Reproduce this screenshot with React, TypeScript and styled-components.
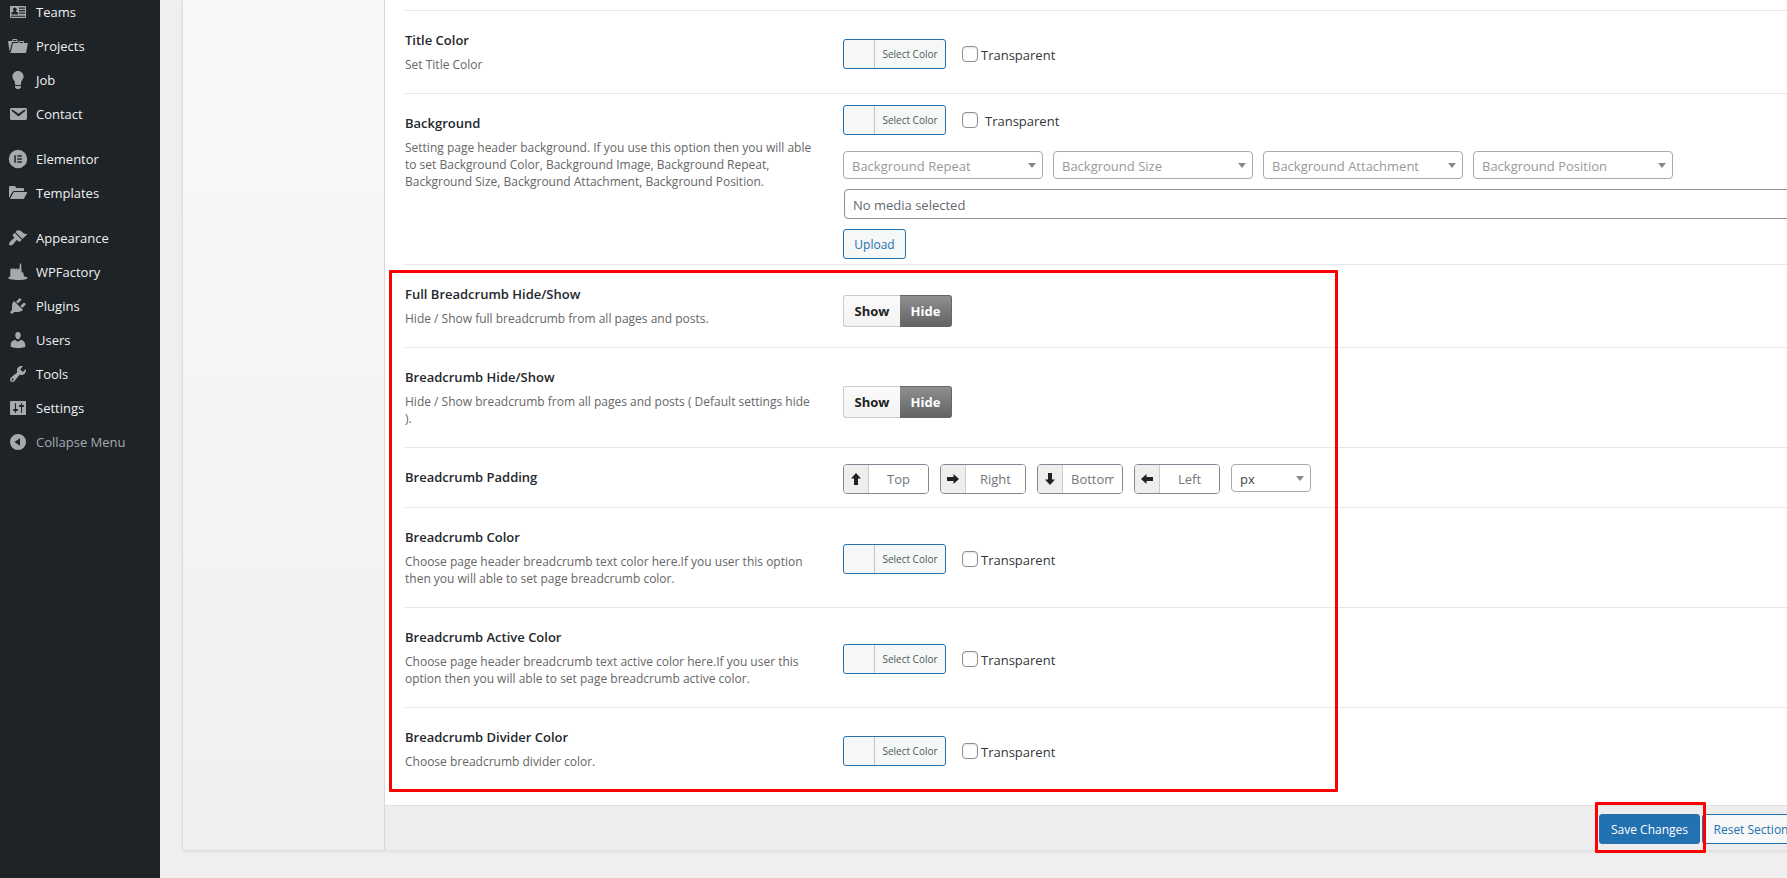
import React, { useId, useState } from "react";
import styled, { createGlobalStyle } from "styled-components";

const GlobalStyle = createGlobalStyle`
  *, *::before, *::after { box-sizing: border-box; }
  body {
    margin: 0;
    background: #f0f0f1;
    color: #333;
    font-family: "Open Sans", "Noto Sans", sans-serif;
    font-size: 13px;
    line-height: 18px;
  }
  input, select, button { font-family: inherit; }
`;

const Page = styled.div`
  display: flex;
  align-items: stretch;
  min-height: 100vh;
  overflow: hidden;
  background: #efefef;
`;

/* ---------- admin menu ---------- */

const Sidebar = styled.nav`
  flex: 0 0 160px;
  background: #1d2327;
`;

const MenuList = styled.ul`
  list-style: none;
  margin: -5px 0 0;
  padding: 0;
`;

const MenuEntry = styled.li<{ $gap?: boolean }>`
  margin-top: ${(p) => (p.$gap ? 11 : 0)}px;
`;

const MenuLink = styled.a<{ $muted?: boolean }>`
  display: flex;
  align-items: center;
  gap: 8px;
  height: 34px;
  padding-left: 8px;
  font-size: 13px;
  color: ${(p) => (p.$muted ? "#a7aaad" : "#f0f0f1")};
  text-decoration: none;
`;

const MenuIcon = styled.svg`
  flex: 0 0 20px;
  width: 20px;
  height: 20px;
  fill: #a7aaad;
`;

type MenuItem = { label: string; icon: React.ReactNode; gap?: boolean; muted?: boolean };

const menu: MenuItem[] = [
  {
    label: "Teams",
    icon: (
      <path
        fillRule="evenodd"
        d="M3 4h14c.6 0 1 .4 1 1v10c0 .6-.4 1-1 1H3c-.6 0-1-.4-1-1V5c0-.6.4-1 1-1zm8 1.500v1.200h6V5.500zm0 2.500v1.200h6V8zm0 2.500v1.200h6v-1.200zM3 13.800v1h14v-1zM6.800 5.500c-1.200 0-1.900.8-1.800 1.900.1 1 .6 1.900 1.100 2.100L3.500 10.300v2.200h6.400v-2.200L7.600 9.500c.5-.2 1-1.100 1.100-2.100.1-1.100-.7-1.900-1.900-1.900z"
      />
    ),
  },
  {
    label: "Projects",
    icon: (
      <path d="M4 5H.78c-.37 0-.74.32-.69.84l1.560 9.990S3.500 8.470 3.860 6.700c.11-.53.61-.7.98-.7H10s-.7-2.080-.77-2.310C9.110 3.250 8.890 3 8.450 3H5.140c-.36 0-.7.23-.8.64C4.250 4.040 4 5 4 5zm4.880 0h-4s.42-1 .87-1h2.130c.48 0 1 1 1 1zM2.670 16.250c-.31.47-.76.75-1.260.75h15.730c.54 0 .92-.31 1.030-.83.44-2.190 1.680-8.440 1.680-8.440.07-.5-.3-.73-.62-.73H16V5.530c0-.16-.26-.53-.66-.53h-3.760c-.52 0-.87.58-.87.58L10 7H5.590c-.32 0-.63.19-.69.5 0 0-1.590 6.700-1.720 7.330-.07.37-.22.99-.51 1.420zM15.380 7H11s.58-1 1.130-1h2.290c.71 0 .96 1 .96 1z" />
    ),
  },
  {
    label: "Job",
    icon: (
      <path d="M10 1c3.110 0 5.630 2.520 5.630 5.620 0 1.840-2.030 4.580-2.030 4.580-.33.44-.6 1.250-.6 1.800v1c0 .55-.45 1-1 1H8c-.55 0-1-.45-1-1v-1c0-.55-.27-1.360-.6-1.800 0 0-2.020-2.740-2.020-4.580C4.380 3.520 6.890 1 10 1zM7 16.870V16h6v.87c0 .62-.13 1.130-.75 1.130H12c0 .62-.4 1-1.020 1h-2c-.61 0-.98-.38-.98-1h-.25c-.62 0-.75-.51-.75-1.130z" />
    ),
  },
  {
    label: "Contact",
    icon: (
      <path d="M3.870 4h13.250C18.370 4 19 4.590 19 5.790v8.420c0 1.190-.63 1.790-1.880 1.790H3.870c-1.250 0-1.880-.6-1.880-1.790V5.790c0-1.200.63-1.790 1.880-1.790zm6.620 8.600l6.740-5.530c.24-.2.43-.66.13-1.070-.29-.41-.82-.42-1.170-.17l-5.700 3.860L4.800 5.830c-.35-.25-.88-.24-1.170.17-.3.41-.11.87.13 1.070z" />
    ),
  },
  {
    label: "Elementor",
    gap: true,
    icon: (
      <path
        fillRule="evenodd"
        d="M10 .8a9.200 9.200 0 1 1 0 18.400A9.200 9.200 0 0 1 10 .8zM6.300 6.300v7.400h1.500V6.300zm3 0v1.500h4.500V6.300zm0 3v1.400h4.500V9.300zm0 2.900v1.500h4.500v-1.500z"
      />
    ),
  },
  {
    label: "Templates",
    icon: (
      <path d="M1 15V4.200C1 3.500 1.500 3 2.200 3h4.300c.5 0 .9.300 1.100.7L8.200 5h6.600c.7 0 1.200.5 1.200 1.200V8H6.200c-.7 0-1.300.4-1.700 1zm1 1l3.300-6.300c.2-.4.600-.7 1.100-.7h12.200c.5 0 .7.400.5.800l-2.900 5.500c-.2.400-.6.7-1.100.7z" />
    ),
  },
  {
    label: "Appearance",
    gap: true,
    icon: (
      <path d="M14.480 11.060L7.410 3.990l1.500-1.500c.5-.56 2.300-.47 3.510.32 1.210.8 1.430 1.280 2.910 2.100 1.180.64 2.450 1.260 4.450.85zm-.71.71L6.700 4.700 4.930 6.470c-.39.39-.39 1.020 0 1.410l1.060 1.060c.39.39.39 1.030 0 1.420-.6.6-1.430 1.110-2.210 1.690-.35.26-.7.53-1.010.84C1.430 14.230.4 16.080 1.400 17.070c.99 1 2.840-.03 4.180-1.360.31-.31.58-.66.85-1.020.57-.78 1.080-1.610 1.690-2.210.39-.39 1.020-.39 1.410 0l1.060 1.060c.39.39 1.020.39 1.410 0z" />
    ),
  },
  {
    label: "WPFactory",
    icon: (
      <path d="M2.300 14.500V7l1.200-1v1.500L5.300 6v1.500L7.100 6v1.500L9 6v2l2-1.800.3 1.800.6-6.500h1.200l.6 9.500 1.300-1.200 1 4.700c1.900.3 3.600.8 3.600 1.500 0 1.200-4.400 2-9.600 2S.3 17.300.3 16c0-.7.800-1.200 2-1.500z" />
    ),
  },
  {
    label: "Plugins",
    icon: (
      <path d="M13.110 4.360L9.870 7.600 8 5.730l3.240-3.240c.35-.34 1.050-.2 1.560.32.52.51.66 1.210.31 1.550zm-8 1.770l.91-1.120 9.010 9.010-1.190.84c-.71.71-2.630 1.160-3.820 1.160H6.140L4.900 17.260c-.59.59-1.540.59-2.120 0-.59-.58-.59-1.530 0-2.120l1.240-1.240v-3.880c0-1.130.4-3.190 1.090-3.890zm7.260 3.970l3.240-3.240c.34-.35 1.040-.21 1.550.31.52.51.66 1.210.31 1.550l-3.240 3.250z" />
    ),
  },
  {
    label: "Users",
    icon: (
      <path d="M10 9.250c-2.270 0-2.730-3.440-2.730-3.440C7 4.020 7.820 2 9.970 2c2.160 0 2.980 2.020 2.710 3.810 0 0-.41 3.440-2.680 3.440zm0 2.570L12.720 10c2.390 0 4.520 2.330 4.520 4.530v2.490s-3.650 1.130-7.240 1.130c-3.650 0-7.240-1.130-7.240-1.130v-2.490c0-2.250 1.940-4.480 4.470-4.480z" />
    ),
  },
  {
    label: "Tools",
    icon: (
      <path d="M16.680 9.770c-1.340 1.340-3.300 1.670-4.950.99l-5.410 6.520c-.99.99-2.590.99-3.580 0s-.99-2.590 0-3.570l6.520-5.420c-.68-1.650-.35-3.610.99-4.950 1.280-1.280 3.120-1.620 4.720-1.060l-2.890 2.890 2.820 2.820 2.860-2.870c.53 1.580.18 3.390-1.080 4.650zM3.810 16.210c.4.39 1.040.39 1.430 0 .4-.4.4-1.040 0-1.430-.39-.4-1.030-.4-1.430 0-.39.39-.39 1.030 0 1.430z" />
    ),
  },
  {
    label: "Settings",
    icon: (
      <path d="M18 16V4c0-.55-.45-1-1-1H3c-.55 0-1 .45-1 1v12c0 .55.45 1 1 1h14c.55 0 1-.45 1-1zM8 11h1c.55 0 1 .45 1 1s-.45 1-1 1H8v1.500c0 .28-.22.5-.5.5s-.5-.22-.5-.5V13H6c-.55 0-1-.45-1-1s.45-1 1-1h1V5.500c0-.28.22-.5.5-.5s.5.22.5.5V11zm5-2h-1c-.55 0-1-.45-1-1s.45-1 1-1h1V5.500c0-.28.22-.5.5-.5s.5.22.5.5V7h1c.55 0 1 .45 1 1s-.45 1-1 1h-1v5.500c0 .28-.22.5-.5.5s-.5-.22-.5-.5V9z" />
    ),
  },
  {
    label: "Collapse Menu",
    muted: true,
    icon: <path fillRule="evenodd" d="M10 2a8 8 0 1 1 0 16 8 8 0 0 1 0-16zm2 4.200L6.500 10l5.500 3.800z" />,
  },
];

/* ---------- options panel ---------- */

const Main = styled.main`
  flex: 1 1 auto;
  min-width: 0;
  padding-left: 22px;
`;

const Panel = styled.div`
  display: flex;
  margin-right: -30px;
  border: 1px solid #dedede;
  border-top: 0;
  box-shadow: 0 1px 4px rgba(0, 0, 0, 0.06);
`;

const SectionNav = styled.div`
  flex: 0 0 201px;
  background: linear-gradient(#f9f9f9, #f0f0f0);
`;

const Options = styled.form`
  flex: 1 1 auto;
  min-width: 0;
  border-left: 1px solid #d8d8d8;
  background: #fff;
`;

const Rows = styled.div`
  padding: 10px 0 15px 20px;
`;

const RowGroup = styled.div<{ $marked?: boolean }>`
  position: relative;
  border-top: 1px solid #e7e7e7;

  &::after {
    content: "";
    display: ${(p) => (p.$marked ? "block" : "none")};
    position: absolute;
    top: 5px;
    bottom: -2px;
    left: -16px;
    width: 949px;
    border: 3px solid #f00;
    border-radius: 1px;
    pointer-events: none;
  }
`;

const Row = styled.section`
  display: grid;
  grid-template-columns: 438px 1fr;

  & + & {
    border-top: 1px solid #e7e7e7;
  }
`;

const RowHead = styled.div`
  padding: 20px 28px 20px 0;
`;

const RowTitle = styled.h3`
  margin: 0;
  font-size: 13px;
  line-height: 18px;
  font-weight: 600;
  color: #23282d;
`;

const RowText = styled.p`
  margin: 7px 0 0;
  font-size: 12px;
  line-height: 17px;
  color: #666;
`;

const fieldPadding = {
  single: "3px 0 0",
  toggle: "9px 0 0",
  inputs: "16px 0 13px",
  stack: "11px 0 5px",
};

const Field = styled.div<{ $kind: keyof typeof fieldPadding }>`
  display: flex;
  flex-direction: column;
  justify-content: center;
  padding: ${(p) => fieldPadding[p.$kind]};
`;

const ColorLine = styled.div`
  display: flex;
  align-items: center;
  gap: 16px;
`;

const ColorButton = styled.button`
  display: flex;
  width: 103px;
  height: 30px;
  padding: 0 0 0 30px;
  border: 1px solid #2271b1;
  border-radius: 3px;
  background: #f6f7f7;
  cursor: pointer;
`;

const ColorButtonText = styled.span`
  flex: 1;
  border-left: 1px solid #c3c4c7;
  font-size: 10px;
  line-height: 28px;
  text-align: center;
  color: #50575e;
`;

const CheckLabel = styled.label<{ $spaced?: boolean }>`
  display: flex;
  align-items: center;
  gap: ${(p) => (p.$spaced ? 7 : 3)}px;
  font-size: 13px;
  line-height: 18px;
  color: #32373c;
`;

const CheckText = styled.span`
  padding-top: 2px;
`;

const CheckBox = styled.input`
  appearance: none;
  width: 16px;
  height: 16px;
  margin: 0;
  border: 1px solid #8c8f94;
  border-radius: 4px;
  background: #fff;
  box-shadow: inset 0 1px 2px rgba(0, 0, 0, 0.1);

  &:checked {
    background: #2271b1;
  }
`;

const Line = styled.div<{ $gap: number; $top?: number }>`
  display: flex;
  gap: ${(p) => p.$gap}px;
  margin-top: ${(p) => p.$top ?? 0}px;
`;

const SelectWrap = styled.div<{ $width: number }>`
  position: relative;
  width: ${(p) => p.$width}px;
  height: 28px;
`;

const Select = styled.select<{ $hint?: boolean }>`
  appearance: none;
  width: 100%;
  height: 28px;
  padding: 1px 20px 0 8px;
  border: 1px solid #aaa;
  border-radius: 4px;
  background: #fff;
  font-size: 13px;
  color: ${(p) => (p.$hint ? "#999" : "#444")};
`;

const SelectArrow = styled.svg`
  position: absolute;
  top: 12px;
  right: 7px;
  width: 8px;
  height: 5px;
  fill: #888;
  pointer-events: none;
`;

const MediaInput = styled.input`
  height: 30px;
  margin: 10px 0 10px 1px;
  padding: 2px 8px 0;
  border: 1px solid #8c8f94;
  border-radius: 4px;
  background: #fff;
  font-size: 13px;
  color: #646970;
`;

const ActionButton = styled.button<{ $width: number; $primary?: boolean }>`
  flex: none;
  width: ${(p) => p.$width}px;
  height: 30px;
  padding: 0;
  border: 1px solid #2271b1;
  border-radius: 3px;
  background: ${(p) => (p.$primary ? "#2271b1" : "#f6f7f7")};
  font-size: 12px;
  white-space: nowrap;
  color: ${(p) => (p.$primary ? "#fff" : "#2271b1")};
  cursor: pointer;
`;

const ToggleSet = styled.div`
  display: flex;
  height: 32px;
`;

const ToggleOption = styled.label<{ $active: boolean }>`
  position: relative;
  display: flex;
  align-items: center;
  justify-content: center;
  width: 52px;
  border: 1px solid ${(p) => (p.$active ? "#666" : "#ccc")};
  background: ${(p) =>
    p.$active ? "linear-gradient(#8f8f8f, #636363)" : "linear-gradient(#fbfbfb, #f3f3f3)"};
  font-weight: 700;
  font-size: 13px;
  color: ${(p) => (p.$active ? "#fff" : "#222")};

  &:first-child {
    width: 57px;
    border-right: 0;
    border-radius: 3px 0 0 3px;
  }
  &:last-child {
    border-left: 0;
    border-radius: 0 3px 3px 0;
  }
`;

const ToggleRadio = styled.input`
  position: absolute;
  inset: 0;
  margin: 0;
  opacity: 0;
`;

const SideBox = styled.label`
  display: flex;
  width: 86px;
  height: 30px;
  border: 1px solid #7e8993;
  border-radius: 4px;
  overflow: hidden;
`;

const SideIcon = styled.span`
  display: flex;
  flex: 0 0 25px;
  align-items: center;
  justify-content: center;
  border-right: 1px solid #ccc;
  background: #eee;
`;

const Arrow = styled.svg`
  width: 12px;
  height: 12px;
  fill: #222;
`;

const SideInput = styled.input`
  flex: 1;
  min-width: 0;
  padding: 0 8px;
  border: 0;
  background: #fff;
  font-size: 13px;
  text-align: center;

  &::placeholder {
    color: #72777c;
    opacity: 1;
  }
`;

const Footer = styled.footer`
  display: flex;
  justify-content: flex-end;
  gap: 2px;
  height: 45px;
  padding: 8px 16px 0 0;
  border-top: 1px solid #e2e2e2;
  background: #ededed;
`;

const Marked = styled.div`
  position: relative;
  z-index: 1;
  height: 30px;

  &::after {
    content: "";
    position: absolute;
    inset: -12px -6px -9px -4px;
    border: 3px solid #f00;
    border-radius: 1px;
    pointer-events: none;
  }
`;

/* ---------- controls ---------- */

function ColorPicker({ spaced }: { spaced?: boolean }) {
  return (
    <ColorLine>
      <ColorButton type="button">
        <ColorButtonText>Select Color</ColorButtonText>
      </ColorButton>
      <CheckLabel $spaced={spaced}>
        <CheckBox type="checkbox" />
        <CheckText>Transparent</CheckText>
      </CheckLabel>
    </ColorLine>
  );
}

function ShowHide({ name: label }: { name: string }) {
  const name = useId();
  const [value, setValue] = useState("Hide");
  return (
    <ToggleSet role="radiogroup" aria-label={label}>
      {["Show", "Hide"].map((option) => (
        <ToggleOption key={option} $active={value === option}>
          <ToggleRadio
            type="radio"
            name={name}
            checked={value === option}
            onChange={() => setValue(option)}
          />
          {option}
        </ToggleOption>
      ))}
    </ToggleSet>
  );
}

function DropDown({ text, name, width, hint }: { text: string; name: string; width: number; hint?: boolean }) {
  return (
    <SelectWrap $width={width}>
      <Select aria-label={name} $hint={hint} defaultValue={text}>
        <option>{text}</option>
      </Select>
      <SelectArrow viewBox="0 0 8 5" aria-hidden="true">
        <path d="M0 0h8L4 5z" />
      </SelectArrow>
    </SelectWrap>
  );
}

const arrowPaths = {
  Top: "M6 0l5 5.500H8V12H4V5.500H1z",
  Right: "M12 6l-5.500 5V8H0V4h6.500V1z",
  Bottom: "M6 12l5-5.500H8V0H4v6.500H1z",
  Left: "M0 6l5.500 5V8H12V4H5.500V1z",
};

function PaddingFields() {
  return (
    <Line $gap={11}>
      {(Object.keys(arrowPaths) as (keyof typeof arrowPaths)[]).map((side) => (
        <SideBox key={side}>
          <SideIcon>
            <Arrow viewBox="0 0 12 12" aria-hidden="true">
              <path d={arrowPaths[side]} />
            </Arrow>
          </SideIcon>
          <SideInput type="text" placeholder={side} aria-label={side} />
        </SideBox>
      ))}
      <DropDown text="px" name="Unit" width={80} />
    </Line>
  );
}

type OptionProps = {
  title: string;
  text?: string;
  kind: keyof typeof fieldPadding;
  children: React.ReactNode;
};

function Option({ title, text, kind, children }: OptionProps) {
  return (
    <Row>
      <RowHead>
        <RowTitle>{title}</RowTitle>
        {text && <RowText>{text}</RowText>}
      </RowHead>
      <Field $kind={kind}>{children}</Field>
    </Row>
  );
}

const backgroundSelects = [
  "Background Repeat",
  "Background Size",
  "Background Attachment",
  "Background Position",
];

export default function App() {
  return (
    <>
      <GlobalStyle />
      <Page>
        <Sidebar>
          <MenuList>
            {menu.map((item) => (
              <MenuEntry key={item.label} $gap={item.gap}>
                <MenuLink href="#" $muted={item.muted}>
                  <MenuIcon viewBox="0 0 20 20" aria-hidden="true">
                    {item.icon}
                  </MenuIcon>
                  {item.label}
                </MenuLink>
              </MenuEntry>
            ))}
          </MenuList>
        </Sidebar>
        <Main>
          <Panel>
            <SectionNav />
            <Options onSubmit={(e) => e.preventDefault()}>
              <Rows>
                <RowGroup>
                  <Option title="Title Color" text="Set Title Color" kind="single">
                    <ColorPicker />
                  </Option>
                  <Option
                    title="Background"
                    text="Setting page header background. If you use this option then you will able to set Background Color, Background Image, Background Repeat, Background Size, Background Attachment, Background Position."
                    kind="stack"
                  >
                    <ColorPicker spaced />
                    <Line $gap={10} $top={16}>
                      {backgroundSelects.map((name) => (
                        <DropDown key={name} text={name} name={name} width={200} hint />
                      ))}
                    </Line>
                    <MediaInput type="text" aria-label="Media" readOnly value="No media selected" />
                    <ActionButton type="button" $width={63}>
                      Upload
                    </ActionButton>
                  </Option>
                </RowGroup>
                <RowGroup $marked>
                  <Option
                    title="Full Breadcrumb Hide/Show"
                    text="Hide / Show full breadcrumb from all pages and posts."
                    kind="toggle"
                  >
                    <ShowHide name="Full Breadcrumb Hide/Show" />
                  </Option>
                  <Option
                    title="Breadcrumb Hide/Show"
                    text="Hide / Show breadcrumb from all pages and posts ( Default settings hide )."
                    kind="toggle"
                  >
                    <ShowHide name="Breadcrumb Hide/Show" />
                  </Option>
                  <Option title="Breadcrumb Padding" kind="inputs">
                    <PaddingFields />
                  </Option>
                  <Option
                    title="Breadcrumb Color"
                    text="Choose page header breadcrumb text color here.If you user this option then you will able to set page breadcrumb color."
                    kind="single"
                  >
                    <ColorPicker />
                  </Option>
                  <Option
                    title="Breadcrumb Active Color"
                    text="Choose page header breadcrumb text active color here.If you user this option then you will able to set page breadcrumb active color."
                    kind="single"
                  >
                    <ColorPicker />
                  </Option>
                  <Option
                    title="Breadcrumb Divider Color"
                    text="Choose breadcrumb divider color."
                    kind="single"
                  >
                    <ColorPicker />
                  </Option>
                </RowGroup>
              </Rows>
              <Footer>
                <Marked>
                  <ActionButton type="submit" $width={101} $primary>
                    Save Changes
                  </ActionButton>
                </Marked>
                <ActionButton type="button" $width={98}>
                  Reset Section
                </ActionButton>
              </Footer>
            </Options>
          </Panel>
        </Main>
      </Page>
    </>
  );
}
